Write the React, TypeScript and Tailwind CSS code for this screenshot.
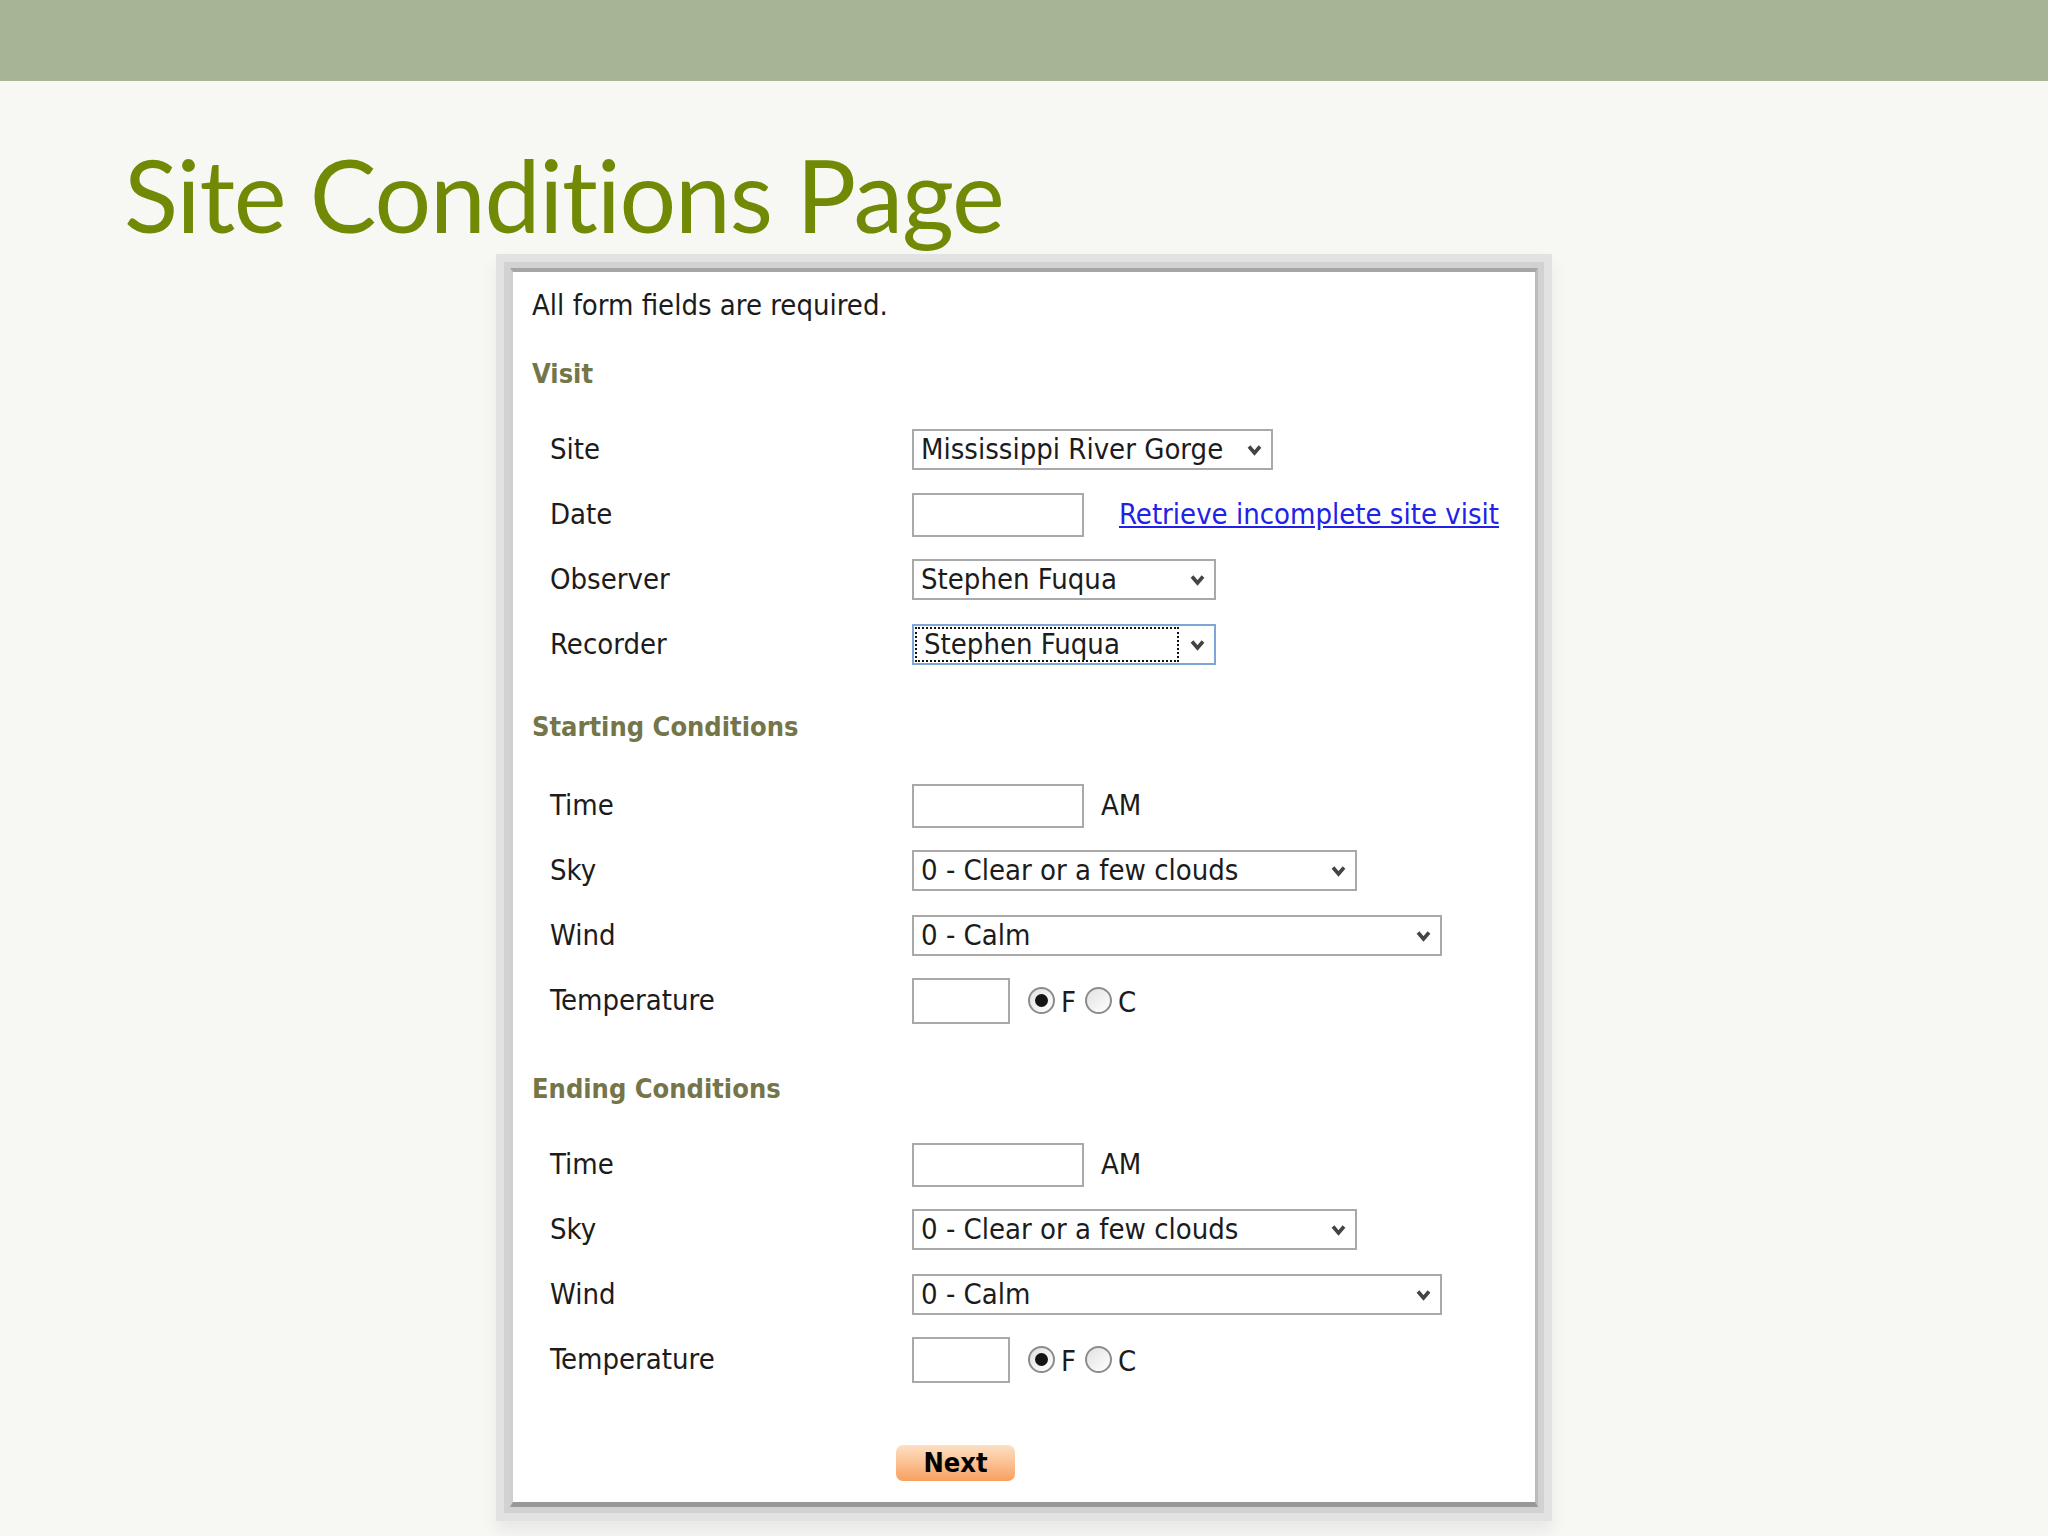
import React from 'react';

const formFont = "font-['DejaVu_Sans_Condensed','DejaVu_Sans',sans-serif]";

function Chevron() {
  return (
    <svg width="15" height="12" viewBox="0 0 15 12" fill="none">
      <path d="M2 2.5 L7.5 9 L13 2.5" stroke="#444" strokeWidth="3.6" strokeLinejoin="miter" />
    </svg>
  );
}

function Select({ value, className, focused }: { value: string; className: string; focused?: boolean }) {
  return (
    <div
      className={`flex h-[41px] items-stretch border-2 bg-white ${className} ${
        focused ? 'border-[#7fa6d6]' : 'border-[#a9a9a9]'
      }`}
    >
      <div
        className={`flex flex-1 items-center pl-[7px] ${
          focused ? 'm-[1px] border-2 border-dotted border-[#111]' : ''
        }`}
      >
        <span className="whitespace-nowrap">{value}</span>
      </div>
      <div className="flex w-[34px] items-center justify-center">
        <Chevron />
      </div>
    </div>
  );
}

function TextBox({ className }: { className: string }) {
  return <div className={`border-2 border-[#a9a9a9] bg-white ${className}`} />;
}

function Radio({ checked }: { checked?: boolean }) {
  return (
    <span className="flex h-[27px] w-[27px] items-center justify-center rounded-full border-2 border-[#8c8c8c] bg-gradient-to-br from-[#e2e2e2] to-white">
      {checked && <span className="h-[13px] w-[13px] rounded-full bg-[#141414]" />}
    </span>
  );
}

function Row({ label, children }: { label: string; children: React.ReactNode }) {
  return (
    <div className="flex h-[65px] items-center">
      <div className="w-[380px] pl-[18px]">{label}</div>
      {children}
    </div>
  );
}

function Heading({ children }: { children: React.ReactNode }) {
  return <div className="flex h-[68px] items-center text-[27px] font-bold text-[#75754a]">{children}</div>;
}

function Conditions() {
  return (
    <>
      <Row label="Time">
        <TextBox className="h-[44px] w-[172px]" />
        <span className="ml-[17px]">AM</span>
      </Row>
      <Row label="Sky">
        <Select value="0 - Clear or a few clouds" className="w-[445px]" />
      </Row>
      <Row label="Wind">
        <Select value="0 - Calm" className="w-[530px]" />
      </Row>
      <Row label="Temperature">
        <TextBox className="h-[46px] w-[98px]" />
        <span className="ml-[18px] flex items-center">
          <Radio checked />
          <span className="ml-[6px] mt-[5px]">F</span>
          <span className="ml-[9px]">
            <Radio />
          </span>
          <span className="ml-[6px] mt-[5px]">C</span>
        </span>
      </Row>
    </>
  );
}

export default function App() {
  return (
    <div className="h-[1536px] w-full overflow-hidden bg-[#f7f7f3]">
      {/* slide header band */}
      <div className="h-[81px] bg-[#a8b496]" />

      <h1 className="ml-[124px] mt-[63px] font-['Lato',sans-serif] text-[100px] leading-none tracking-[-1.2px] text-[#718a05] [font-variant-ligatures:none]">
        Site Conditions Page
      </h1>

      {/* screenshot of the form */}
      <div
        className={`ml-[510px] mt-[24px] w-[1028px] border-b-[5px] border-l-[3px] border-r-[3px] border-t-[4px] border-b-[#989898] border-l-[#cfcfcf] border-r-[#bcbcbc] border-t-[#a6a6a6] bg-white pl-[19px] text-[29px] text-[#1c1c1c] shadow-[0_0_0_6px_#d2d2d2,0_0_0_14px_#e2e2e2,0_10px_14px_14px_#e8e8e8] ${formFont}`}
      >
        <div className="flex h-[68px] items-center">All form fields are required.</div>
        <Heading>Visit</Heading>

        <div className="mt-[9px]">
          <Row label="Site">
            <Select value="Mississippi River Gorge" className="w-[361px]" />
          </Row>
          <Row label="Date">
            <TextBox className="h-[44px] w-[172px]" />
            <a className="ml-[35px] text-[#2222e6] underline" href="#">
              Retrieve incomplete site visit
            </a>
          </Row>
          <Row label="Observer">
            <Select value="Stephen Fuqua" className="w-[304px]" />
          </Row>
          <Row label="Recorder">
            <Select value="Stephen Fuqua" className="w-[304px]" focused />
          </Row>
        </div>

        <div className="mt-[16px]">
          <Heading>Starting Conditions</Heading>
        </div>
        <div className="mt-[12px]">
          <Conditions />
        </div>

        <div className="mt-[22px]">
          <Heading>Ending Conditions</Heading>
        </div>
        <div className="mt-[9px]">
          <Conditions />
        </div>

        <div className="pb-[21px] pt-[53px]">
          <button className="ml-[364px] flex h-[36px] w-[119px] items-center justify-center rounded-[7px] bg-gradient-to-b from-[#fde0c4] to-[#f6a05e] text-[27px] font-bold text-black">
            Next
          </button>
        </div>
      </div>
    </div>
  );
}
